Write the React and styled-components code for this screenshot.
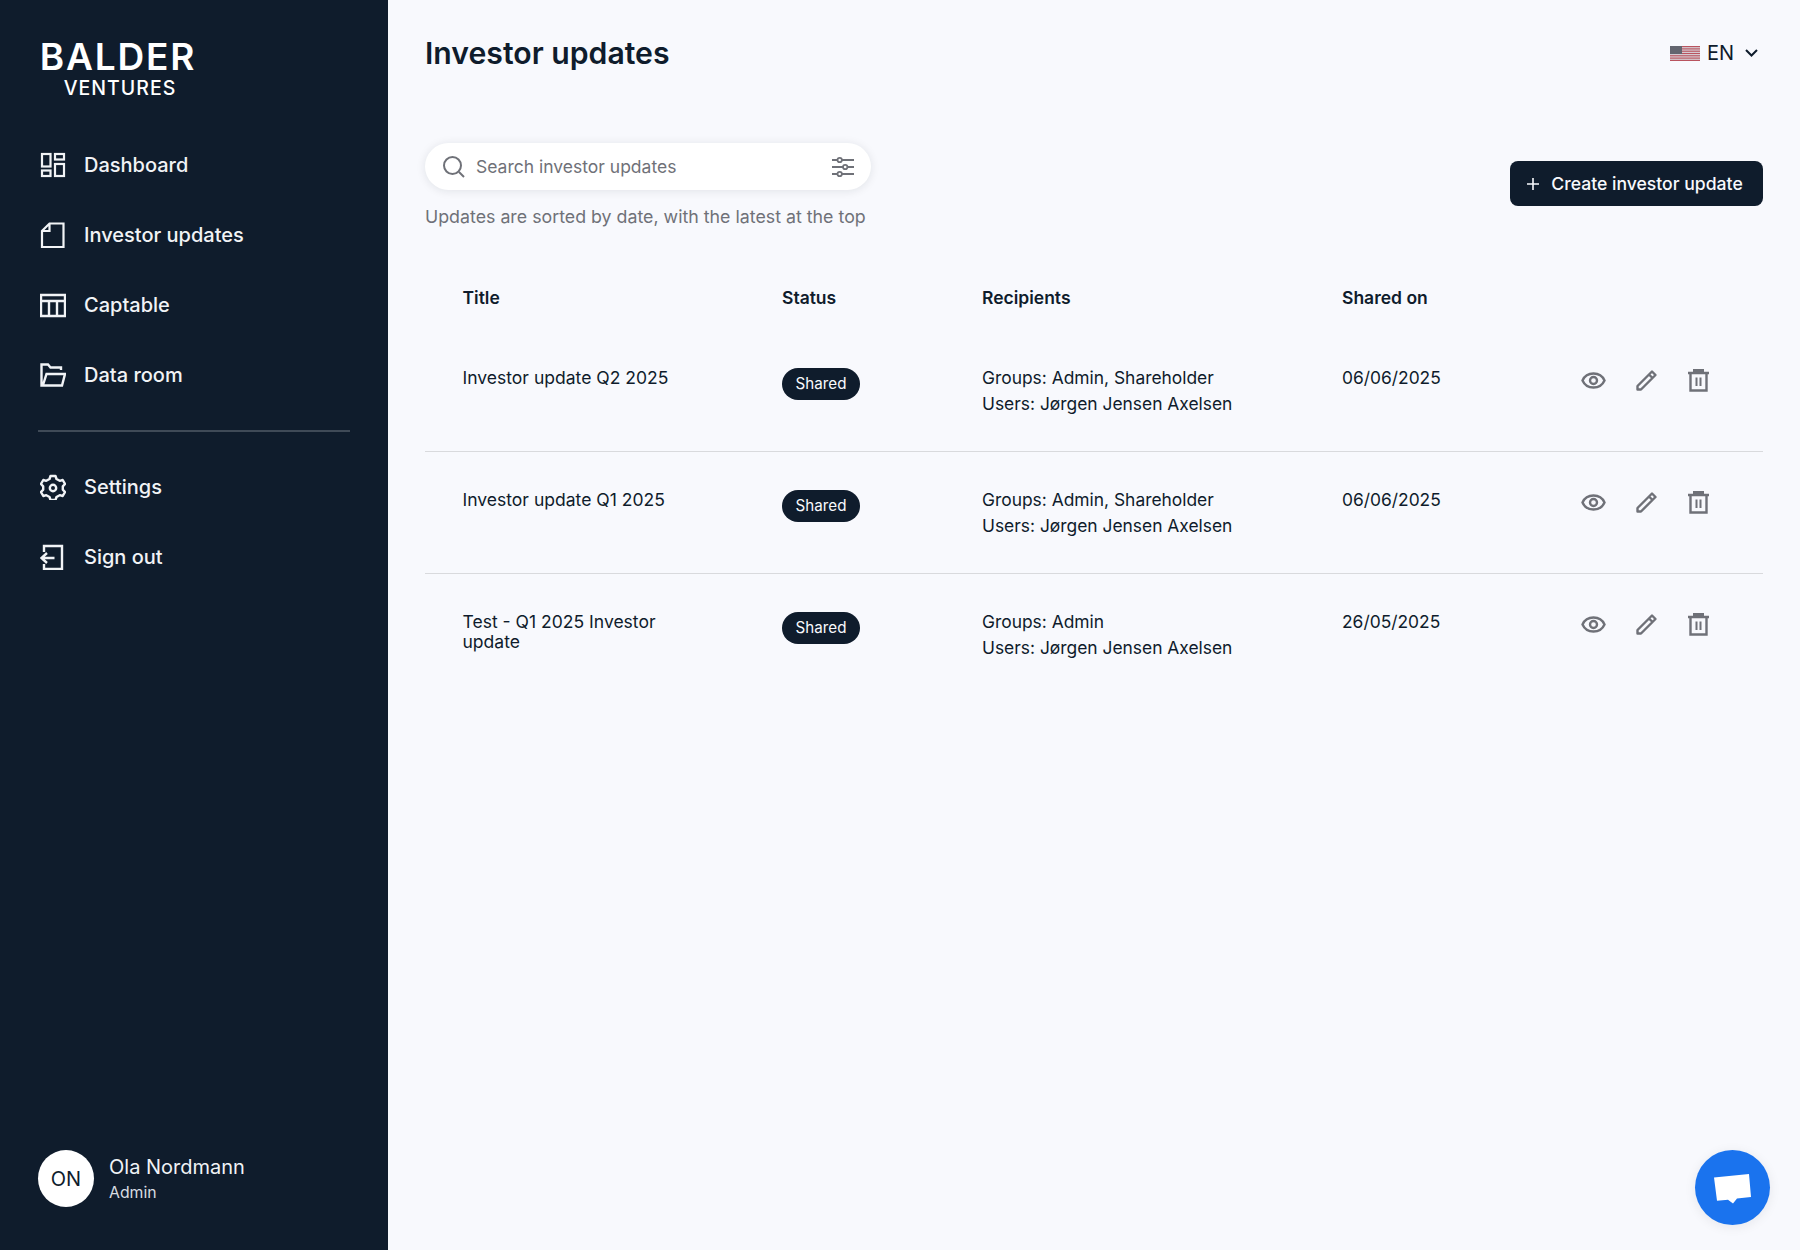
import React from "react";
import styled, { createGlobalStyle } from "styled-components";

const Global = createGlobalStyle`
  html, body { margin: 0; padding: 0; background: #f8f9fd; }
  body { font-family: Inter, "Liberation Sans", sans-serif; color: #0f1c2c; }
  * { box-sizing: border-box; }
`;

const Page = styled.div`
  display: grid;
  grid-template-columns: 388px 1fr;
  width: 1800px;
  height: 1250px;
  overflow: hidden;
  position: relative;
`;

const Sidebar = styled.aside`
  background: #0f1c2c;
  color: #fff;
  display: flex;
  flex-direction: column;
  padding: 42px 38px 43px;
`;

const Logo = styled.div`
  display: flex;
  flex-direction: column;
  width: 156px;
  margin-left: 2px;
  align-items: center;
  margin-bottom: 32px;
`;
const LogoTop = styled.span`
  font-family: Inter, sans-serif;
  font-weight: 600;
  font-size: 37px;
  line-height: 30px;
  letter-spacing: 1.8px;
  white-space: nowrap;
`;
const LogoBottom = styled.span`
  font-family: Inter, sans-serif;
  font-weight: 500;
  font-size: 19.5px;
  line-height: 20px;
  letter-spacing: 1px;
  margin-top: 6px;
  margin-left: 4px;
  white-space: nowrap;
`;

const Nav = styled.nav`
  display: flex;
  flex-direction: column;
`;
const NavItem = styled.a`
  display: flex;
  align-items: center;
  gap: 18px;
  height: 70px;
  padding-left: 2px;
  font-size: 20px;
  font-weight: 500;
  color: #f1f3f6;
  svg { width: 26px; height: 26px; flex: none; }
`;
const Divider = styled.hr`
  width: 312px;
  height: 2px;
  margin: 20px 0 20px;
  border: 0;
  background: #3f4a57;
`;

const Profile = styled.div`
  margin-top: auto;
  display: flex;
  align-items: center;
  gap: 15px;
`;
const Avatar = styled.div`
  width: 56px;
  height: 57px;
  border-radius: 50%;
  background: #fff;
  color: #0f1c2c;
  display: flex;
  align-items: center;
  justify-content: center;
  font-size: 20px;
`;
const ProfileText = styled.div`
  display: flex;
  flex-direction: column;
  gap: 4px;
`;
const Name = styled.span`
  font-size: 20px;
  line-height: 24px;
  color: #f1f3f6;
`;
const Role = styled.span`
  font-size: 15.8px;
  line-height: 20px;
  color: #d8dce1;
`;

const Main = styled.main`
  display: flex;
  flex-direction: column;
  padding: 0 37px;
`;
const TopBar = styled.header`
  height: 143px;
  display: flex;
  justify-content: space-between;
  padding-top: 32px;
`;
const Title = styled.h1`
  margin: 0;
  font-size: 30.2px;
  line-height: 42px;
  font-weight: 600;
  color: #0f1c2c;
`;
const Lang = styled.div`
  display: flex;
  align-items: center;
  height: 42px;
  font-size: 20px;
  gap: 7px;
  padding-right: 5px;
  svg:last-child { margin-left: 4px; }
`;

const Toolbar = styled.section`
  display: flex;
  justify-content: space-between;
  align-items: flex-start;
`;
const SearchColumn = styled.div`
  display: flex;
  flex-direction: column;
  gap: 16px;
`;
const SearchBox = styled.div`
  width: 446px;
  height: 47px;
  border-radius: 24px;
  background: #fff;
  box-shadow: 0 1px 10px rgba(15, 28, 44, 0.1);
  display: flex;
  align-items: center;
  padding: 0 17px;
  gap: 10px;
  color: #6f7178;
`;
const Placeholder = styled.span`
  flex: 1;
  font-size: 17.5px;
`;
const Hint = styled.p`
  margin: 0;
  font-size: 17.8px;
  line-height: 22px;
  color: #6f7178;
`;
const CreateButton = styled.button`
  margin-top: 18px;
  width: 253px;
  height: 45px;
  border: 0;
  border-radius: 8px;
  background: #0f1c2c;
  color: #f8f9fd;
  font: 500 17.6px Inter, sans-serif;
  display: flex;
  align-items: center;
  justify-content: center;
  gap: 11px;
  padding: 0 4px 0 0;
`;

const Table = styled.div`
  display: flex;
  flex-direction: column;
  margin-top: 58px;
`;
const columns = `319.5px 200px 360px 238.5px 1fr`;
const HeadRow = styled.div`
  display: grid;
  grid-template-columns: ${columns};
  padding-left: 37.5px;
  height: 44px;
  align-items: start;
  font-size: 17.5px;
  font-weight: 600;
  line-height: 24px;
`;
const Row = styled.div`
  display: grid;
  grid-template-columns: ${columns};
  padding: 35px 0 0 37.5px;
  height: 122px;
  font-size: 17.4px;
  line-height: 26px;
  color: #0f1c2c;
  border-bottom: ${(p) => (p.$last ? "0" : "1px solid #d9dadd")};
`;
const RowTitle = styled.div`
  max-width: 225px;
  font-size: 17.55px;
  line-height: 20px;
  padding-top: 3px;
`;
const Badge = styled.span`
  justify-self: start;
  height: 32px;
  margin-top: 3px;
  width: 78px;
  border-radius: 16px;
  background: #0f1c2c;
  color: #f8f9fd;
  font-size: 15.2px;
  display: flex;
  align-items: center;
  justify-content: center;
`;
const Recipients = styled.div`
  display: flex;
  flex-direction: column;
`;
const Actions = styled.div`
  display: flex;
  gap: 28px;
  color: #6f7178;
  padding-top: 3px;
  align-items: flex-start;
  svg { width: 25px; height: 25px; }
`;
const ChatButton = styled.button`
  position: absolute;
  right: 30px;
  bottom: 25px;
  width: 75px;
  height: 75px;
  border: 0;
  border-radius: 50%;
  background: #1a73ee;
  box-shadow: 0 2px 12px rgba(15, 28, 44, 0.08);
  display: flex;
  align-items: center;
  justify-content: center;
  padding: 0;
`;

const S = { fill: "none", stroke: "currentColor", strokeWidth: 2 };

const IconDash = () => (
  <svg viewBox="0 0 26 26" {...S} strokeWidth="2.2">
    <rect x="2" y="2" width="8.500" height="12.500" />
    <rect x="15" y="2" width="9" height="5.500" />
    <rect x="2" y="18.500" width="8.500" height="5.500" />
    <rect x="15" y="12" width="9" height="12" />
  </svg>
);
const IconDoc = () => (
  <svg viewBox="0 0 26 26" {...S} strokeWidth="2.2">
    <path d="M2 25h21.500V1.500H9.500L2 9z M9.500 1.500V9H2" />
  </svg>
);
const IconTable = () => (
  <svg viewBox="0 0 26 26" {...S} strokeWidth="2.400">
    <path d="M1 3h24v21H1z M1 9h24 M9 9v15 M17 9v15" />
  </svg>
);
const IconFolder = () => (
  <svg viewBox="0 0 26 26" {...S} strokeWidth="2.400">
    <path d="M21 8V5.500H10.500L8 2.500H1.500v21h20.500l3-11.500H6.500L3 23" />
  </svg>
);
const IconGear = () => (
  <svg viewBox="0 0 26 26" {...S} strokeWidth="2.400">
    <path d="M10.500 2h5l1 3 3.200 1.800 3-.8 2.300 4-2.200 2.400v3.200L25 18l-2.300 4-3-.8-3.200 1.800-1 3h-5l-1-3-3.200-1.800-3 .8L1 18l2.200-2.400v-3.200L1 10l2.300-4 3 .8L9.500 5z" strokeLinejoin="round" />
    <circle cx="13" cy="14" r="3.200" />
  </svg>
);
const IconOut = () => (
  <svg viewBox="0 0 26 26" {...S} strokeWidth="2.400">
    <path d="M4 8V2h18v23H4v-5 M1.500 14h13 M7 9l-5.500 5 5.500 5" />
  </svg>
);
const IconSearch = () => (
  <svg width="24" height="24" viewBox="0 0 24 24" {...S}>
    <circle cx="10.500" cy="10.500" r="8.500" />
    <path d="M17 17l5 5" />
  </svg>
);
const IconSliders = () => (
  <svg width="22" height="22" viewBox="0 0 22 22" {...S} strokeWidth="1.800">
    <path d="M0 4h5.500 M10 4h12 M0 11h11 M15.500 11H22 M0 18h5.500 M10 18h12" />
    <circle cx="7.700" cy="4" r="2.200" />
    <circle cx="13.200" cy="11" r="2.200" />
    <circle cx="7.700" cy="18" r="2.200" />
  </svg>
);
const IconPlus = () => (
  <svg width="14" height="14" viewBox="0 0 14 14" stroke="currentColor" strokeWidth="1.600">
    <path d="M7 1v12 M1 7h12" />
  </svg>
);
const IconChevron = () => (
  <svg width="13" height="8" viewBox="0 0 13 8" fill="none" stroke="#0f1c2c" strokeWidth="2">
    <path d="M1 1l5.500 5.500L12 1" />
  </svg>
);
const IconEye = () => (
  <svg viewBox="0 0 25 25" {...S} strokeWidth="2.400">
    <path d="M1.500 12.500C3.500 8 8 5.500 12.500 5.500s9 2.500 11 7c-2 4.500-6.500 7-11 7s-9-2.500-11-7z" />
    <circle cx="12.500" cy="12.500" r="3.500" />
  </svg>
);
const IconPencil = () => (
  <svg viewBox="0 0 25 25" {...S} strokeWidth="2.400">
    <path d="M3.500 18L18 3.500l3.500 3.500L7 21.500H3.500z M15 6.500l3.500 3.500" strokeLinejoin="round" />
  </svg>
);
const IconTrash = () => (
  <svg viewBox="1 0 25 25" {...S} strokeWidth="2.400">
    <path d="M2 5h21 M4.500 5v17.500h16V5" />
    <path d="M8.500 4V2.500h8V4" strokeWidth="3" />
    <path d="M10.500 9.500v8.500 M14.500 9.500v8.500" strokeWidth="2" />
  </svg>
);
const Flag = () => (
  <svg width="30" height="15" viewBox="0 0 30 15">
    <rect width="30" height="15" fill="#d9d9df" />
    {[0, 2.300, 4.600, 6.900, 9.200, 11.500, 13.800].map((y) => (
      <rect key={y} y={y} width="30" height="1.200" fill="#b9545f" />
    ))}
    <rect width="12" height="8" fill="#63656f" />
  </svg>
);
const ChatGlyph = () => (
  <svg width="38" height="32" viewBox="0 0 38 32">
    <path d="M0 5.500L35 2l2 23-14 1.500-4 5-5-3.800-11 1z" fill="#fff" />
  </svg>
);

const nav = [
  [IconDash, "Dashboard"],
  [IconDoc, "Investor updates"],
  [IconTable, "Captable"],
  [IconFolder, "Data room"],
];
const rows = [
  { title: "Investor update Q2 2025", groups: "Groups: Admin, Shareholder", date: "06/06/2025" },
  { title: "Investor update Q1 2025", groups: "Groups: Admin, Shareholder", date: "06/06/2025" },
  { title: "Test - Q1 2025 Investor update", groups: "Groups: Admin", date: "26/05/2025" },
];

export default function App() {
  return (
    <Page>
      <Global />
      <Sidebar>
        <Logo>
          <LogoTop>BALDER</LogoTop>
          <LogoBottom>VENTURES</LogoBottom>
        </Logo>
        <Nav>
          {nav.map(([Icon, label]) => (
            <NavItem key={label}>
              <Icon />
              {label}
            </NavItem>
          ))}
          <Divider />
          <NavItem><IconGear />Settings</NavItem>
          <NavItem><IconOut />Sign out</NavItem>
        </Nav>
        <Profile>
          <Avatar>ON</Avatar>
          <ProfileText>
            <Name>Ola Nordmann</Name>
            <Role>Admin</Role>
          </ProfileText>
        </Profile>
      </Sidebar>
      <Main>
        <TopBar>
          <Title>Investor updates</Title>
          <Lang>
            <Flag />
            EN
            <IconChevron />
          </Lang>
        </TopBar>
        <Toolbar>
          <SearchColumn>
            <SearchBox>
              <IconSearch />
              <Placeholder>Search investor updates</Placeholder>
              <IconSliders />
            </SearchBox>
            <Hint>Updates are sorted by date, with the latest at the top</Hint>
          </SearchColumn>
          <CreateButton>
            <IconPlus />
            Create investor update
          </CreateButton>
        </Toolbar>
        <Table>
          <HeadRow>
            <span>Title</span>
            <span>Status</span>
            <span>Recipients</span>
            <span>Shared on</span>
          </HeadRow>
          {rows.map((r, i) => (
            <Row key={r.title} $last={i === rows.length - 1}>
              <RowTitle>{r.title}</RowTitle>
              <Badge>Shared</Badge>
              <Recipients>
                <span>{r.groups}</span>
                <span>Users: Jørgen Jensen Axelsen</span>
              </Recipients>
              <span>{r.date}</span>
              <Actions>
                <IconEye />
                <IconPencil />
                <IconTrash />
              </Actions>
            </Row>
          ))}
        </Table>
      </Main>
      <ChatButton aria-label="Chat">
        <ChatGlyph />
      </ChatButton>
    </Page>
  );
}
